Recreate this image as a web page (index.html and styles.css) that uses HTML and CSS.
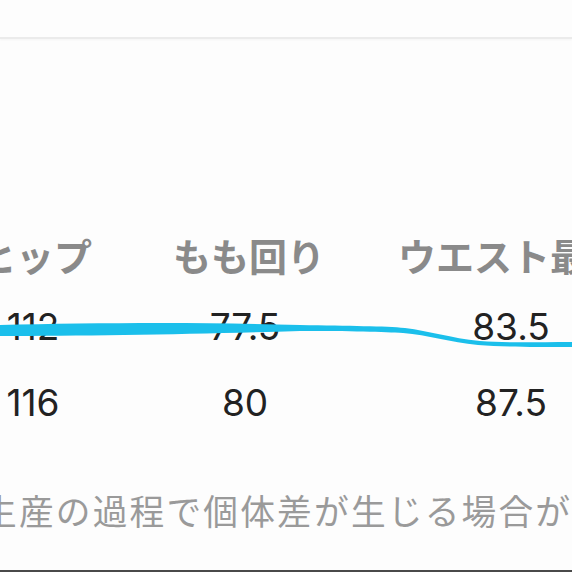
FILE: index.html
```html
<!DOCTYPE html>
<html lang="ja">
<head>
<meta charset="utf-8">
<title>サイズ表</title>
<link rel="stylesheet" href="styles.css">
</head>
<body>
<div class="page">
  <div class="topbar"></div>
  <div class="size-table">
    <div class="row head">
      <div class="cell">ヒップ</div>
      <div class="cell">もも回り</div>
      <div class="cell">ウエスト最小</div>
    </div>
    <div class="row r1">
      <div class="cell">112</div>
      <div class="cell">77.5</div>
      <div class="cell">83.5</div>
    </div>
    <div class="row r2">
      <div class="cell">116</div>
      <div class="cell">80</div>
      <div class="cell">87.5</div>
    </div>
  </div>
  <p class="note">生産の過程で個体差が生じる場合があります。</p>
  <div class="bottom-line"></div>
  <svg class="marker" viewBox="0 0 572 572" width="572" height="572" aria-hidden="true">
    <path d="M0,325 C90,323 200,322 300,325 C350,326 385,326 405,328 C430,331 450,338 480,341 C505,343 535,342 572,342 L572,347 C535,347 505,347 478,345 C450,342 428,335 403,333 C385,332 350,331 300,331 C200,334 90,336 0,336 Z" />
  </svg>
</div>
</body>
</html>
```
FILE: styles.css
```css
html, body {
  margin: 0;
  padding: 0;
  background: #fdfdfd;
}

.page {
  position: relative;
  width: 572px;
  height: 572px;
  overflow: hidden;
  display: flex;
  flex-direction: column;
  background: #fdfdfd;
}

.topbar {
  height: 37px;
  border-bottom: 2px solid #ebebeb;
  box-shadow: 0 1px 2px rgba(0, 0, 0, 0.04);
  flex: none;
}

.size-table {
  margin-top: 197px;
  margin-left: -67px;
  display: flex;
  flex-direction: column;
}

.row {
  display: grid;
  white-space: nowrap;
  grid-template-columns: 200px 224px 308px;
}

.cell {
  text-align: center;
}

.head {
  grid-template-columns: 204px 224px 304px;
  height: 38px;
  line-height: 38px;
  font-family: "Noto Sans CJK JP", sans-serif;
  font-weight: 700;
  font-size: 38px;
  color: #8a8a8a;
}

.head .cell:last-child {
  text-align: left;
  padding-left: 37px;
}

.r1, .r2 {
  height: 44px;
  line-height: 44px;
  font-family: Inter, "Liberation Sans", sans-serif;
  font-size: 37px;
  color: #222;
}

.r1 {
  margin-top: 31px;
}

.r2 {
  margin-top: 32px;
}

.note {
  margin: 68px 0 0 -18px;
  white-space: nowrap;
  font-family: "Noto Sans CJK JP", sans-serif;
  font-size: 34.7px;
  letter-spacing: 2.2px;
  line-height: 35px;
  color: #9a9a9a;
}

.bottom-line {
  margin-top: auto;
  height: 2px;
  background: #4a4a4a;
  flex: none;
}

.marker {
  position: absolute;
  left: 0;
  top: 0;
  pointer-events: none;
}

.marker path {
  fill: #1bbfeb;
}
```
